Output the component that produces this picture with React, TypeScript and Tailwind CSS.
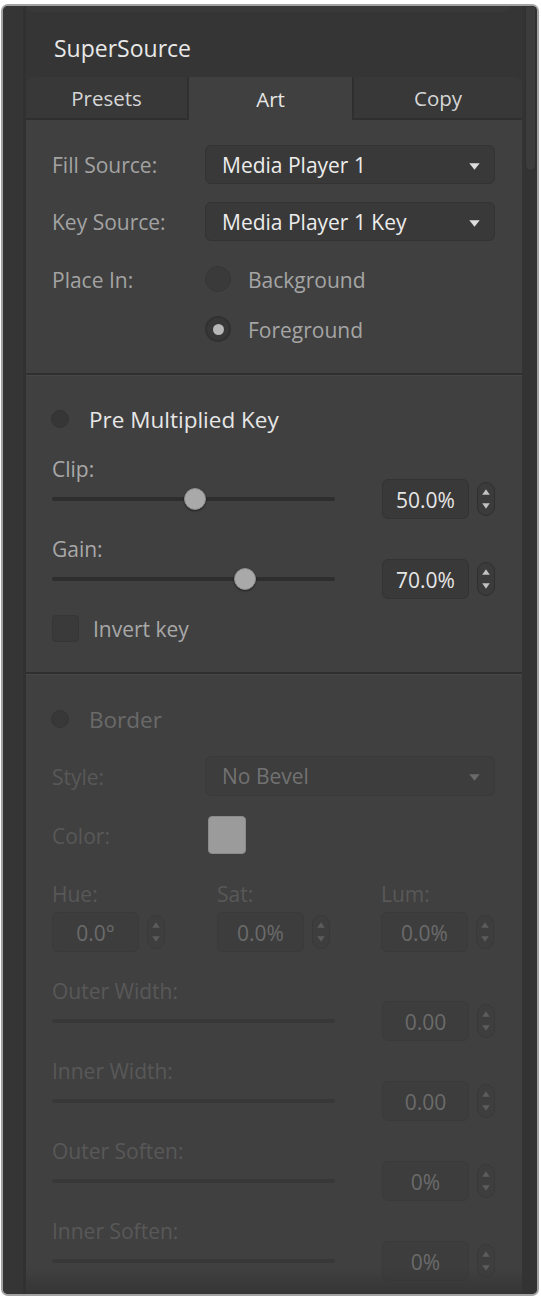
import React from "react";

function Tri({ up, color }: { up?: boolean; color: string }) {
  return (
    <svg width="8" height="6" viewBox="0 0 8 6">
      <path d={up ? "M4 0.3 L7.8 5.7 L0.2 5.7 Z" : "M0.2 0.3 L7.8 0.3 L4 5.7 Z"} fill={color} />
    </svg>
  );
}

function Spinner({ disabled }: { disabled?: boolean }) {
  return (
    <div
      className={
        disabled
          ? "w-[18px] h-[34px] rounded-full border border-[#393939] bg-[#3e3e3e] flex flex-col items-center justify-center gap-[8px]"
          : "w-[18px] h-[34px] rounded-full border border-[#2f2f2f] bg-[#3b3b3b] flex flex-col items-center justify-center gap-[8px]"
      }
    >
      <Tri up color={disabled ? "#5c5c5c" : "#c2c2c2"} />
      <Tri color={disabled ? "#5c5c5c" : "#c2c2c2"} />
    </div>
  );
}

function ValueBox({ value, disabled }: { value: string; disabled?: boolean }) {
  return (
    <div
      className={
        disabled
          ? "w-[87px] h-[40px] pt-[3px] rounded-[6px] border border-[#3a3a3a] bg-[#3d3d3d] flex items-center justify-center text-[21px] text-[#6b6b6b]"
          : "w-[87px] h-[40px] pt-[3px] rounded-[6px] border border-[#333333] bg-[#393939] flex items-center justify-center text-[21px] text-[#e6e6e6]"
      }
    >
      {value}
    </div>
  );
}

function Dropdown({ text, disabled }: { text: string; disabled?: boolean }) {
  return (
    <div
      className={
        disabled
          ? "w-[290px] h-[40px] rounded-[6px] border border-[#3a3a3a] bg-[#3d3d3d] pl-[16px] pr-[14px] flex items-center justify-between text-[21px] text-[#727272]"
          : "w-[290px] h-[39px] rounded-[6px] border border-[#333333] bg-[#393939] pl-[16px] pr-[14px] flex items-center justify-between text-[21px] text-[#ececec]"
      }
    >
      <span className="pt-[2px]">{text}</span>
      <svg width="11" height="7" viewBox="0 0 11 7" className="mt-[3px]">
        <path d="M0.3 0.3 L10.7 0.3 L5.5 6.7 Z" fill={disabled ? "#6a6a6a" : "#dedede"} />
      </svg>
    </div>
  );
}

function SliderRow({
  value,
  thumbClass,
  disabled,
}: {
  value: string;
  thumbClass?: string;
  disabled?: boolean;
}) {
  return (
    <div className="h-[40px] flex items-center">
      <div
        className={
          disabled
            ? "relative w-[283px] h-[4px] rounded-full bg-[#383838]"
            : "relative w-[283px] h-[4px] rounded-full bg-[#2e2e2e]"
        }
      >
        {thumbClass && (
          <div
            className={
              "absolute top-[-9px] w-[22px] h-[22px] rounded-full bg-[#a9a9a9] border border-[#8c8c8c] shadow-[0_1px_2px_rgba(0,0,0,0.5)] " +
              thumbClass
            }
          />
        )}
      </div>
      <div className="ml-auto flex items-center gap-[8px]">
        <ValueBox value={value} disabled={disabled} />
        <Spinner disabled={disabled} />
      </div>
    </div>
  );
}

function Separator() {
  return <div className="h-[2px] bg-[#2f2f2f] shadow-[0_1px_0_rgba(255,255,255,0.04)]" />;
}

export default function App() {
  return (
    <div className="w-[541px] h-[1300px] bg-white pt-[4px] pl-[1px] font-['Open_Sans',sans-serif]">
      <div className="w-[538px] h-[1292px] border-2 border-[#a2a2a2] rounded-[7px] bg-[#353535] overflow-hidden flex">
        {/* left strip */}
        <div className="w-[23px] shrink-0 bg-[#353535] border-r-[3px] border-[#313131]" />
        {/* main column */}
        <div className="w-[496px] shrink-0 flex flex-col">
          <div className="h-[71px] shrink-0 relative">
            <div className="h-[6px] mr-[12px] bg-[#393939] rounded-b-[6px]" />
            <div className="pl-[28px] pt-[22px] text-[23px] leading-[28px] font-medium text-[#e8e8e8]">
              SuperSource
            </div>
          </div>
          {/* tabs */}
          <div className="h-[43px] shrink-0 flex rounded-t-[7px] overflow-hidden text-[20.5px]">
            <div className="w-[163px] pt-[2px] bg-[#383838] border-b-2 border-r-2 border-[#2f2f2f] flex items-center justify-center text-[#d6d6d6]">
              Presets
            </div>
            <div className="w-[163px] pt-[2px] bg-[#404040] flex items-center justify-center text-[#e6e6e6]">
              Art
            </div>
            <div className="flex-1 pt-[2px] bg-[#383838] border-b-2 border-l-2 border-[#2f2f2f] flex items-center justify-center text-[#d6d6d6]">
              Copy
            </div>
          </div>
          {/* content */}
          <div className="flex-1 bg-[#404040] relative overflow-hidden">
            {/* section 1 */}
            <div className="pl-[26px] pr-[27px] pt-[25px] pb-[24px] text-[21px]">
              <div className="flex items-center h-[39px]">
                <div className="w-[153px] pt-[2px] text-[#a3a3a3]">Fill Source:</div>
                <Dropdown text="Media Player 1" />
              </div>
              <div className="flex items-center h-[39px] mt-[18px]">
                <div className="w-[153px] pt-[2px] text-[#a3a3a3]">Key Source:</div>
                <Dropdown text="Media Player 1 Key" />
              </div>
              <div className="flex items-center h-[40px] mt-[18px]">
                <div className="w-[153px] pt-[3px] text-[#a3a3a3]">Place In:</div>
                <div className="w-[26px] h-[26px] rounded-full bg-[#3a3a3a] border border-[#373737]" />
                <div className="ml-[17px] pt-[3px] text-[#a5a5a5]">Background</div>
              </div>
              <div className="flex items-center h-[40px] mt-[10px]">
                <div className="w-[153px]" />
                <div className="w-[26px] h-[26px] rounded-full bg-[#383838] border-2 border-[#313131] flex items-center justify-center">
                  <div className="w-[11px] h-[11px] rounded-full bg-[#b8b8b8]" />
                </div>
                <div className="ml-[17px] pt-[3px] text-[#a5a5a5]">Foreground</div>
              </div>
            </div>
            <Separator />
            {/* section 2 */}
            <div className="pl-[26px] pr-[27px] pt-[29px] pb-[30px] text-[21px]">
              <div className="flex items-center h-[30px]">
                <div className="ml-[-1px] w-[18px] h-[18px] rounded-full bg-[#363636] border border-[#333333]" />
                <div className="ml-[20px] pt-[2px] text-[22.5px] text-[#e6e6e6]">Pre Multiplied Key</div>
              </div>
              <div className="h-[22px] mt-[23px] pt-[3px] flex items-center text-[#a8a8a8]">Clip:</div>
              <SliderRow value="50.0%" thumbClass="left-[132px]" />
              <div className="h-[22px] mt-[18px] pt-[3px] flex items-center text-[#a8a8a8]">Gain:</div>
              <SliderRow value="70.0%" thumbClass="left-[182px]" />
              <div className="flex items-center h-[28px] mt-[15px]">
                <div className="w-[27px] h-[27px] rounded-[4px] bg-[#3a3a3a] border border-[#363636]" />
                <div className="ml-[14px] pt-[3px] text-[#a8a8a8]">Invert key</div>
              </div>
            </div>
            <Separator />
            {/* section 3 (disabled) */}
            <div className="pl-[26px] pr-[27px] pt-[30px] text-[21px]">
              <div className="flex items-center h-[30px]">
                <div className="ml-[-1px] w-[18px] h-[18px] rounded-full bg-[#383838] border border-[#353535]" />
                <div className="ml-[20px] pt-[2px] text-[22.5px] text-[#6a6a6a]">Border</div>
              </div>
              <div className="flex items-center h-[40px] mt-[22px]">
                <div className="w-[153px] pt-[3px] text-[#585858]">Style:</div>
                <Dropdown text="No Bevel" disabled />
              </div>
              <div className="flex items-center h-[38px] mt-[20px]">
                <div className="w-[156px] pt-[3px] text-[#585858]">Color:</div>
                <div className="w-[38px] h-[38px] rounded-[4px] bg-[#9b9b9b] border border-[#8a8a8a]" />
              </div>
              <div className="flex h-[22px] mt-[28px] pt-[3px] text-[#585858]">
                <div className="w-[165px] flex items-center">Hue:</div>
                <div className="w-[164px] flex items-center">Sat:</div>
                <div className="flex items-center">Lum:</div>
              </div>
              <div className="flex h-[40px] mt-[8px]">
                <div className="w-[165px] flex items-center gap-[8px]">
                  <ValueBox value="0.0°" disabled />
                  <Spinner disabled />
                </div>
                <div className="w-[164px] flex items-center gap-[8px]">
                  <ValueBox value="0.0%" disabled />
                  <Spinner disabled />
                </div>
                <div className="flex items-center gap-[8px]">
                  <ValueBox value="0.0%" disabled />
                  <Spinner disabled />
                </div>
              </div>
              <div className="h-[22px] mt-[27px] pt-[3px] flex items-center text-[#585858]">Outer Width:</div>
              <SliderRow value="0.00" disabled />
              <div className="h-[22px] mt-[18px] pt-[3px] flex items-center text-[#585858]">Inner Width:</div>
              <SliderRow value="0.00" disabled />
              <div className="h-[22px] mt-[18px] pt-[3px] flex items-center text-[#585858]">Outer Soften:</div>
              <SliderRow value="0%" disabled />
              <div className="h-[22px] mt-[18px] pt-[3px] flex items-center text-[#585858]">Inner Soften:</div>
              <SliderRow value="0%" disabled />
            </div>
            <div className="absolute left-0 right-0 bottom-0 h-[26px] bg-gradient-to-b from-[rgba(51,51,51,0)] to-[#353535]" />
          </div>
        </div>
        {/* scrollbar */}
        <div className="w-[15px] shrink-0 pl-[3px] pt-[1px] bg-[#333333]">
          <div className="w-[11px] h-[164px] rounded-b-full bg-[#3c3c3c] border border-[#303030] border-t-0" />
        </div>
      </div>
    </div>
  );
}
